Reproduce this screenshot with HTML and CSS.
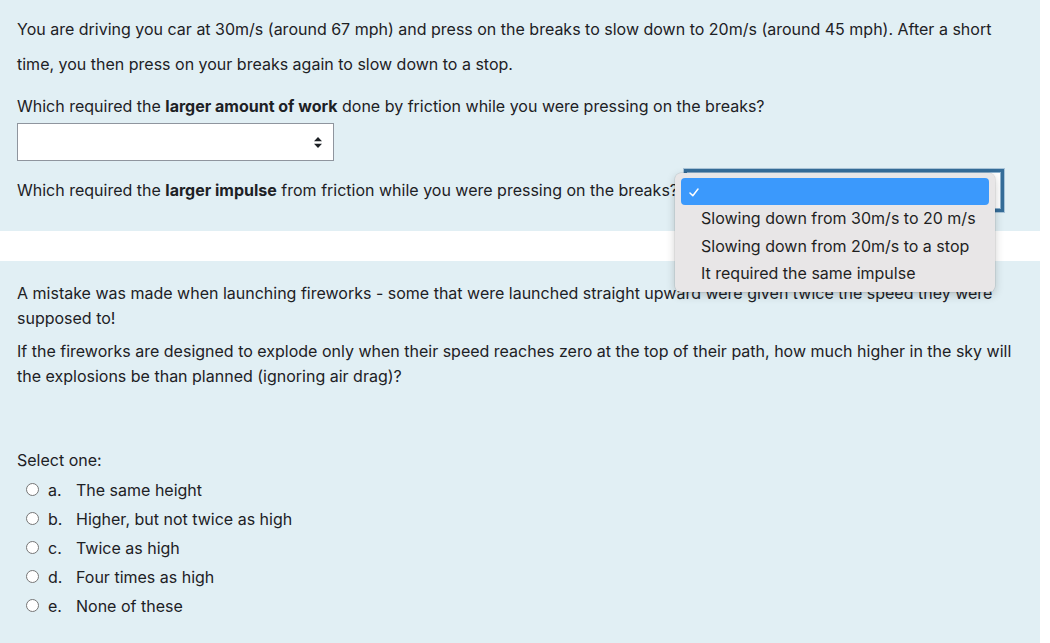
FILE: index.html
```html
<!DOCTYPE html>
<html>
<head>
<meta charset="utf-8">
<link rel="stylesheet" href="styles.css">
</head>
<body>
<div class="page">
  <div class="que que-first">
    <p class="intro">You are driving you car at 30m/s (around 67 mph) and press on the breaks to slow down to 20m/s (around 45 mph). After a short time, you then press on your breaks again to slow down to a stop.</p>
    <p class="qline">Which required the <b>larger amount of work</b> done by friction while you were pressing on the breaks?</p>
    <div class="select sel1">
      <svg class="updown" width="8" height="11" viewBox="0 0 8 11"><path d="M4 0 L8 4.3 H0 Z M0 6.7 H8 L4 11 Z" fill="#1d2125"/></svg>
    </div>
    <div class="qrow">
      <span>Which required the <b>larger impulse</b> from friction while you were pressing on the breaks?</span>
      <div class="select sel2"></div>
    </div>
  </div>
  <div class="gap"></div>
  <div class="que que-second">
    <p class="para">A mistake was made when launching fireworks - some that were launched straight upward were given twice the speed they were supposed to!</p>
    <p class="para">If the fireworks are designed to explode only when their speed reaches zero at the top of their path, how much higher in the sky will the explosions be than planned (ignoring air drag)?</p>
    <div class="prompt">Select one:</div>
    <div class="answers">
      <div class="opt"><span class="radio"></span><span class="letter">a.</span><span>The same height</span></div>
      <div class="opt"><span class="radio"></span><span class="letter">b.</span><span>Higher, but not twice as high</span></div>
      <div class="opt"><span class="radio"></span><span class="letter">c.</span><span>Twice as high</span></div>
      <div class="opt"><span class="radio"></span><span class="letter">d.</span><span>Four times as high</span></div>
      <div class="opt"><span class="radio"></span><span class="letter">e.</span><span>None of these</span></div>
    </div>
  </div>
  <div class="popup">
    <div class="item selected">
      <svg class="check" width="10" height="9" viewBox="0 0 10 9"><path d="M1 5 L3.8 7.8 L9 1" fill="none" stroke="#fff" stroke-width="1.5" stroke-linecap="round" stroke-linejoin="round"/></svg>
    </div>
    <div class="item">Slowing down from 30m/s to 20 m/s</div>
    <div class="item">Slowing down from 20m/s to a stop</div>
    <div class="item">It required the same impulse</div>
  </div>
</div>
</body>
</html>
```
FILE: styles.css
```css
html, body {
  margin: 0;
  padding: 0;
  background: #ffffff;
}
body {
  font-family: Inter, "Noto Sans", "Liberation Sans", sans-serif;
  font-size: 16px;
  color: #1d2125;
}
.page {
  position: relative;
  width: 1050px;
  height: 643px;
  overflow: hidden;
}
.que {
  width: 1040px;
  background: #e1eff4;
  box-sizing: border-box;
  padding: 0 23px 0 17px;
}
.que-first {
  height: 231px;
  padding-top: 12px;
}
.intro {
  margin: 0;
  line-height: 35px;
}
.qline {
  margin: 11.5px 0 0 0;
  line-height: 25px;
}
.select {
  box-sizing: border-box;
  background: #ffffff;
  border: 1px solid #8f959e;
  position: relative;
}
.sel1 {
  margin-top: 4.5px;
  width: 317px;
  height: 38px;
}
.updown {
  position: absolute;
  right: 11px;
  top: 13px;
}
.qrow {
  display: flex;
  align-items: center;
  margin-top: 10.5px;
  line-height: 25px;
  white-space: nowrap;
}
.sel2 {
  margin-left: 9px;
  flex: none;
  width: 314px;
  height: 37px;
  border: 1px solid #8fb3cf;
  box-shadow: 0 0 0 3px #356d99, 0 0 0 4px #a9c4d8;
}
.gap {
  height: 30px;
}
.que-second {
  height: 382px;
  padding-top: 20px;
}
.para {
  margin: 0 0 8px 0;
  line-height: 25px;
}
.prompt {
  margin-top: 59px;
  line-height: 25px;
}
.answers {
  margin-top: 2px;
  display: flex;
  flex-direction: column;
}
.opt {
  display: flex;
  align-items: center;
  height: 29px;
  padding-left: 9px;
}
.radio {
  width: 11px;
  height: 11px;
  border: 1px solid #767676;
  border-radius: 50%;
  background: #ffffff;
  margin-right: 9px;
}
.letter {
  width: 28px;
}
.popup {
  position: absolute;
  left: 675px;
  top: 173px;
  width: 320px;
  height: 119px;
  box-sizing: border-box;
  padding: 5px 6px;
  background: #e8e6e7;
  border-radius: 6px;
  box-shadow: 0 0 0 0.5px rgba(0,0,0,0.12), 0 3px 10px rgba(0,0,0,0.2);
  font-size: 16px;
  color: #1f1f1f;
}
.item {
  height: 27.5px;
  line-height: 27.5px;
  padding-left: 20px;
  position: relative;
}
.item.selected {
  height: 27px;
  background: #3b99fc;
  border-radius: 4px;
}
.check {
  position: absolute;
  left: 8px;
  top: 10px;
}
```
